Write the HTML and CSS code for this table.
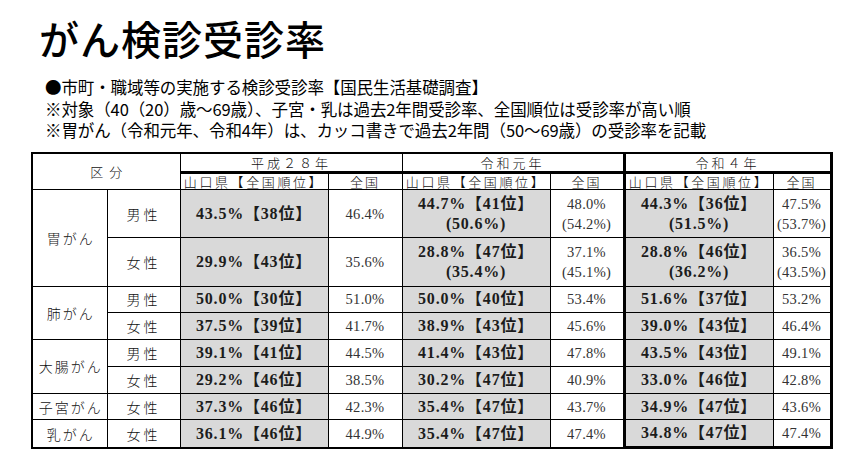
FILE: index.html
```html
<!DOCTYPE html>
<html lang="ja">
<head>
<meta charset="utf-8">
<link rel="stylesheet" href="styles.css">
</head>
<body>
<div class="page">
  <h1 class="title">がん検診受診率</h1>
  <div class="notes">
    <p>●市町・職域等の実施する検診受診率【国民生活基礎調査】</p>
    <p>※対象（40（20）歳～69歳）、子宮・乳は過去2年間受診率、全国順位は受診率が高い順</p>
    <p>※胃がん（令和元年、令和4年）は、カッコ書きで過去2年間（50～69歳）の受診率を記載</p>
  </div>
  <table class="rates">
    <colgroup>
      <col class="c-kind"><col class="c-sex">
      <col class="c-pref"><col class="c-nat">
      <col class="c-pref"><col class="c-nat">
      <col class="c-pref2"><col class="c-nat2">
    </colgroup>
    <thead>
      <tr class="h1">
        <th colspan="2" rowspan="2" class="kubun">区分</th>
        <th colspan="2" class="year">平成２８年</th>
        <th colspan="2" class="year">令和元年</th>
        <th colspan="2" class="year r4l r4r">令和４年</th>
      </tr>
      <tr class="h2">
        <th class="sub">山口県【全国順位】</th><th class="sub">全国</th>
        <th class="sub">山口県【全国順位】</th><th class="sub">全国</th>
        <th class="sub r4l">山口県【全国順位】</th><th class="sub r4r">全国</th>
      </tr>
    </thead>
    <tbody>
      <tr class="tall">
        <td rowspan="2" class="kind">胃がん</td><td class="sex">男性</td>
        <td class="pref">43.5%【38位】</td><td class="nat">46.4%</td>
        <td class="pref">44.7%【41位】<br>(50.6%)</td><td class="nat">48.0%<br>(54.2%)</td>
        <td class="pref r4l">44.3%【36位】<br>(51.5%)</td><td class="nat r4r">47.5%<br>(53.7%)</td>
      </tr>
      <tr class="tall2">
        <td class="sex">女性</td>
        <td class="pref">29.9%【43位】</td><td class="nat">35.6%</td>
        <td class="pref">28.8%【47位】<br>(35.4%)</td><td class="nat">37.1%<br>(45.1%)</td>
        <td class="pref r4l">28.8%【46位】<br>(36.2%)</td><td class="nat r4r">36.5%<br>(43.5%)</td>
      </tr>
      <tr>
        <td rowspan="2" class="kind">肺がん</td><td class="sex">男性</td>
        <td class="pref">50.0%【30位】</td><td class="nat">51.0%</td>
        <td class="pref">50.0%【40位】</td><td class="nat">53.4%</td>
        <td class="pref r4l">51.6%【37位】</td><td class="nat r4r">53.2%</td>
      </tr>
      <tr>
        <td class="sex">女性</td>
        <td class="pref">37.5%【39位】</td><td class="nat">41.7%</td>
        <td class="pref">38.9%【43位】</td><td class="nat">45.6%</td>
        <td class="pref r4l">39.0%【43位】</td><td class="nat r4r">46.4%</td>
      </tr>
      <tr>
        <td rowspan="2" class="kind">大腸がん</td><td class="sex">男性</td>
        <td class="pref">39.1%【41位】</td><td class="nat">44.5%</td>
        <td class="pref">41.4%【43位】</td><td class="nat">47.8%</td>
        <td class="pref r4l">43.5%【43位】</td><td class="nat r4r">49.1%</td>
      </tr>
      <tr>
        <td class="sex">女性</td>
        <td class="pref">29.2%【46位】</td><td class="nat">38.5%</td>
        <td class="pref">30.2%【47位】</td><td class="nat">40.9%</td>
        <td class="pref r4l">33.0%【46位】</td><td class="nat r4r">42.8%</td>
      </tr>
      <tr>
        <td class="kind">子宮がん</td><td class="sex">女性</td>
        <td class="pref">37.3%【46位】</td><td class="nat">42.3%</td>
        <td class="pref">35.4%【47位】</td><td class="nat">43.7%</td>
        <td class="pref r4l">34.9%【47位】</td><td class="nat r4r">43.6%</td>
      </tr>
      <tr class="last">
        <td class="kind">乳がん</td><td class="sex">女性</td>
        <td class="pref">36.1%【46位】</td><td class="nat">44.9%</td>
        <td class="pref">35.4%【47位】</td><td class="nat">47.4%</td>
        <td class="pref r4l r4b">34.8%【47位】</td><td class="nat r4r r4b">47.4%</td>
      </tr>
    </tbody>
  </table>
</div>
</body>
</html>
```

FILE: styles.css
```css
html, body {
  margin: 0;
  padding: 0;
  background: #ffffff;
}
.page {
  width: 868px;
  height: 463px;
  overflow: hidden;
  padding: 0 0 0 31px;
  box-sizing: border-box;
}
.title {
  margin: 0;
  padding: 14px 0 0 8px;
  height: 64px;
  box-sizing: border-box;
  font-family: "Noto Sans CJK JP", sans-serif;
  font-weight: 500;
  font-size: 40px;
  line-height: 48px;
  letter-spacing: 1px;
  color: #000;
}
.notes {
  padding: 13px 0 0 14px;
  font-family: "Noto Sans CJK JP", sans-serif;
  font-size: 16.5px;
  line-height: 21.5px;
  color: #000;
  height: 88px;
  box-sizing: border-box;
}
.notes p {
  margin: 0;
  height: 21.5px;
  white-space: nowrap;
  letter-spacing: -0.1px;
}
.rates {
  margin-top: 0;
  border-collapse: collapse;
  table-layout: fixed;
  width: 801px;
  font-family: "Liberation Serif", "Noto Sans CJK JP", serif;
  color: #222;
}
.c-kind { width: 75px; }
.c-sex { width: 73px; }
.c-pref { width: 148px; }
.c-nat { width: 74px; }
.c-pref2 { width: 149px; }
.c-nat2 { width: 58px; }
.rates th, .rates td {
  border: 1px solid #000;
  padding: 0;
  text-align: center;
  vertical-align: middle;
  white-space: nowrap;
  overflow: hidden;
}
.rates thead th {
  font-family: "Noto Sans CJK JP", sans-serif;
  font-weight: 300;
  font-size: 13px;
  color: #111;
}
.h1 th { height: 17px; line-height: 15px; }
.h1 .year {
  border-bottom: 3px solid #000;
  letter-spacing: 3px;
}
.h2 th { height: 15px; line-height: 15px; }
.kubun {
  letter-spacing: 6px;
  padding-left: 6px !important;
}
.sub {
  letter-spacing: 2px;
}
.h2 .sub:nth-child(odd) {
  letter-spacing: 2.6px;
}
.rates tbody td { height: 25.8px; line-height: 18px; }
.rates tbody tr.tall td { height: 47px; }
.rates tbody tr.tall2 td { height: 47.5px; }
.kind, .sex {
  font-family: "Noto Sans CJK JP", sans-serif;
  font-weight: 300;
  font-size: 14px;
  color: #111;
  letter-spacing: 3px;
}
.kind { letter-spacing: 2px; padding-left: 2px !important; }
.pref {
  background: #d9d9d9;
  font-weight: 700;
  font-size: 16px;
  color: #1c1c1c;
  letter-spacing: 0.8px;
  line-height: 20px !important;
}
.nat {
  font-size: 14.5px;
  font-weight: 400;
  color: #333;
  letter-spacing: 0.3px;
  line-height: 20px !important;
}
.rates .r4l { border-left: 3px solid #000; }
.rates .r4r { border-right: 3px solid #000; }
.rates .r4b { border-bottom: 3px solid #000; }
.rates .h1 th { border-top: 2px solid #000; }
.rates .kind, .rates .kubun { border-left: 2px solid #000; }
.rates tr.last td { border-bottom: 2px solid #000; }
.rates tr.last td.r4b { border-bottom: 3px solid #000; }
```
